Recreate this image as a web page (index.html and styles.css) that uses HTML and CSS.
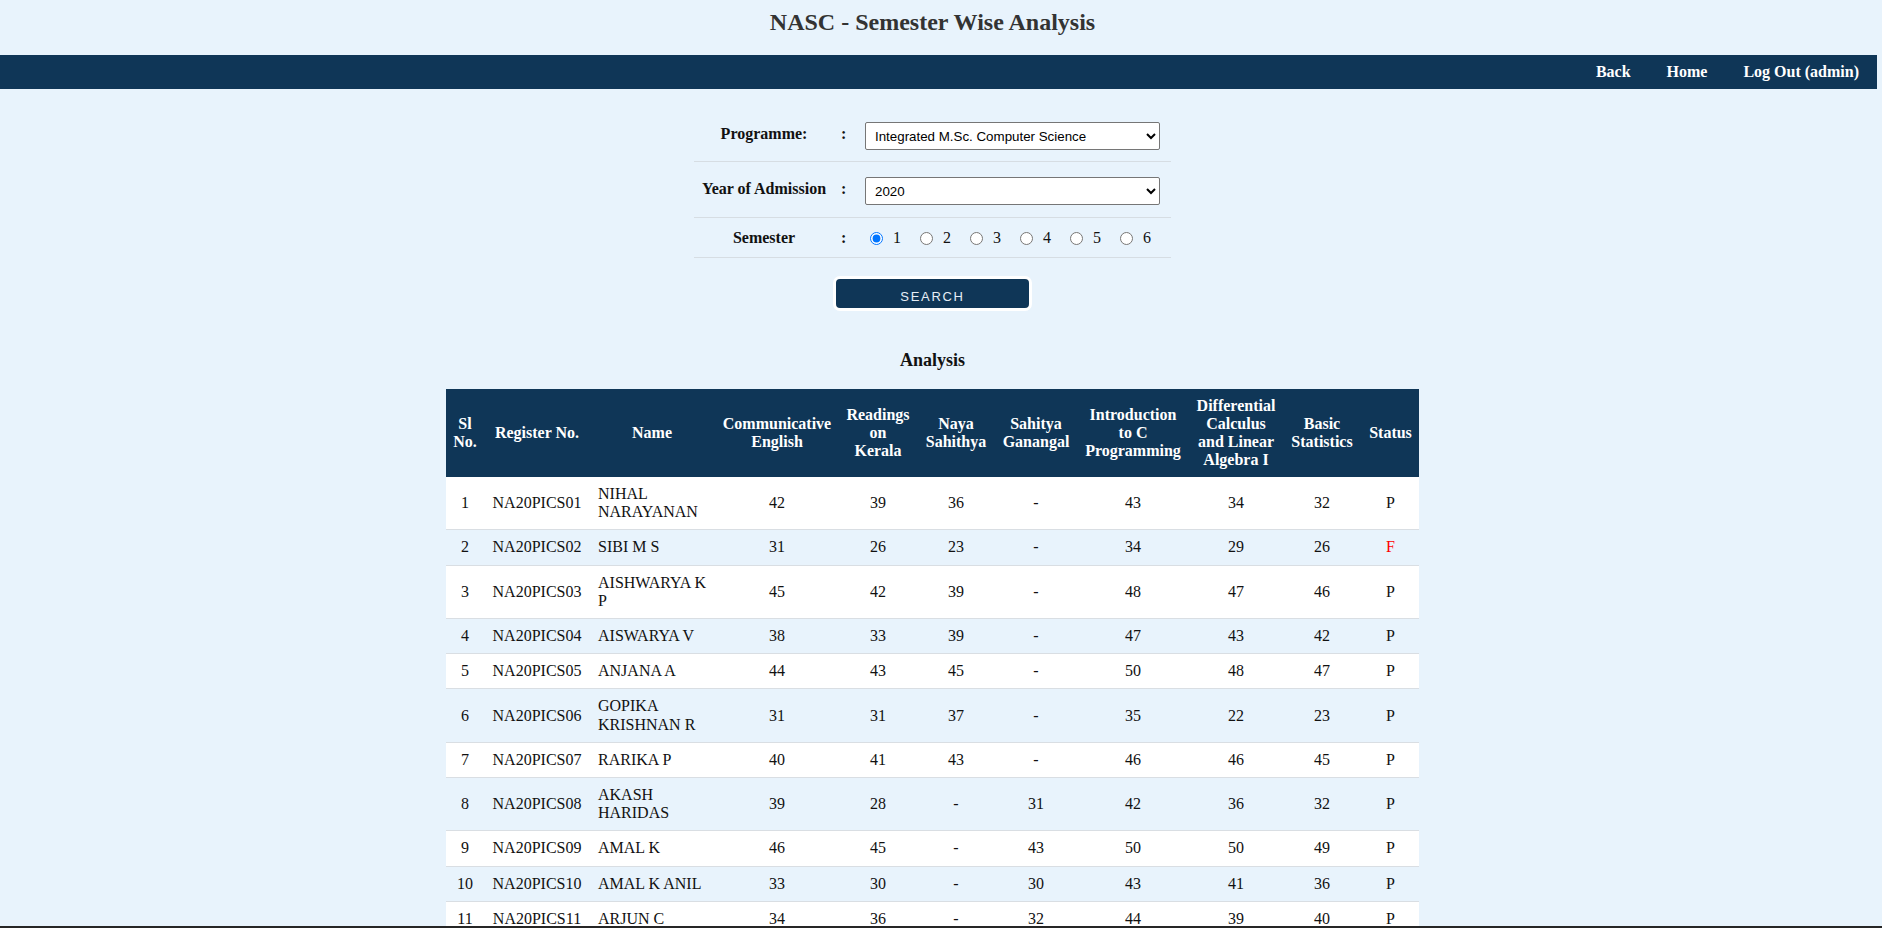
FILE: index.html
```html
<!DOCTYPE html>
<html lang="en">
<head>
<meta charset="utf-8">
<title>NASC - Semester Wise Analysis</title>
<link rel="stylesheet" href="styles.css">
</head>
<body>
<header class="site-header">
  <h1 class="site-title">NASC - Semester Wise Analysis</h1>
</header>
<nav class="topnav">
  <a class="topnav-link" href="#">Back</a>
  <a class="topnav-link" href="#">Home</a>
  <a class="topnav-link" href="#">Log Out (admin)</a>
</nav>
<main class="content">
  <form class="filter-form">
    <div class="filter-row row-prog">
      <label class="filter-label">Programme:</label>
      <span class="filter-colon">:</span>
      <div class="filter-field">
        <select class="filter-select">
          <option>Integrated M.Sc. Computer Science</option>
        </select>
      </div>
    </div>
    <div class="filter-row row-year">
      <label class="filter-label">Year of Admission</label>
      <span class="filter-colon">:</span>
      <div class="filter-field">
        <select class="filter-select">
          <option>2020</option>
        </select>
      </div>
    </div>
    <div class="filter-row row-sem">
      <label class="filter-label">Semester</label>
      <span class="filter-colon">:</span>
      <div class="filter-field radios">
        <label class="radio-opt"><input type="radio" name="sem" checked><span>1</span></label>
        <label class="radio-opt"><input type="radio" name="sem"><span>2</span></label>
        <label class="radio-opt"><input type="radio" name="sem"><span>3</span></label>
        <label class="radio-opt"><input type="radio" name="sem"><span>4</span></label>
        <label class="radio-opt"><input type="radio" name="sem"><span>5</span></label>
        <label class="radio-opt"><input type="radio" name="sem"><span>6</span></label>
      </div>
    </div>
    <div class="form-actions">
      <button type="button" class="search-btn">SEARCH</button>
    </div>
  </form>

  <h2 class="section-title">Analysis</h2>

  <table class="analysis">
    <colgroup>
      <col class="c-sl"><col class="c-reg"><col class="c-name"><col class="c-eng"><col class="c-read">
      <col class="c-naya"><col class="c-sahi"><col class="c-intro"><col class="c-diff"><col class="c-stat"><col class="c-status">
    </colgroup>
    <thead>
      <tr>
        <th>Sl No.</th>
        <th>Register No.</th>
        <th>Name</th>
        <th>Communicative English</th>
        <th>Readings on Kerala</th>
        <th>Naya Sahithya</th>
        <th>Sahitya Ganangal</th>
        <th>Introduction to C Programming</th>
        <th>Differential Calculus and Linear Algebra I</th>
        <th>Basic Statistics</th>
        <th class="th-status">Status</th>
      </tr>
    </thead>
    <tbody>
      <tr><td>1</td><td>NA20PICS01</td><td class="name">NIHAL NARAYANAN</td><td>42</td><td>39</td><td>36</td><td>-</td><td>43</td><td>34</td><td>32</td><td>P</td></tr>
      <tr><td>2</td><td>NA20PICS02</td><td class="name">SIBI M S</td><td>31</td><td>26</td><td>23</td><td>-</td><td>34</td><td>29</td><td>26</td><td class="fail">F</td></tr>
      <tr><td>3</td><td>NA20PICS03</td><td class="name">AISHWARYA K P</td><td>45</td><td>42</td><td>39</td><td>-</td><td>48</td><td>47</td><td>46</td><td>P</td></tr>
      <tr><td>4</td><td>NA20PICS04</td><td class="name">AISWARYA V</td><td>38</td><td>33</td><td>39</td><td>-</td><td>47</td><td>43</td><td>42</td><td>P</td></tr>
      <tr><td>5</td><td>NA20PICS05</td><td class="name">ANJANA A</td><td>44</td><td>43</td><td>45</td><td>-</td><td>50</td><td>48</td><td>47</td><td>P</td></tr>
      <tr><td>6</td><td>NA20PICS06</td><td class="name">GOPIKA KRISHNAN R</td><td>31</td><td>31</td><td>37</td><td>-</td><td>35</td><td>22</td><td>23</td><td>P</td></tr>
      <tr><td>7</td><td>NA20PICS07</td><td class="name">RARIKA P</td><td>40</td><td>41</td><td>43</td><td>-</td><td>46</td><td>46</td><td>45</td><td>P</td></tr>
      <tr><td>8</td><td>NA20PICS08</td><td class="name">AKASH HARIDAS</td><td>39</td><td>28</td><td>-</td><td>31</td><td>42</td><td>36</td><td>32</td><td>P</td></tr>
      <tr><td>9</td><td>NA20PICS09</td><td class="name">AMAL K</td><td>46</td><td>45</td><td>-</td><td>43</td><td>50</td><td>50</td><td>49</td><td>P</td></tr>
      <tr><td>10</td><td>NA20PICS10</td><td class="name">AMAL K ANIL</td><td>33</td><td>30</td><td>-</td><td>30</td><td>43</td><td>41</td><td>36</td><td>P</td></tr>
      <tr><td>11</td><td>NA20PICS11</td><td class="name">ARJUN C</td><td>34</td><td>36</td><td>-</td><td>32</td><td>44</td><td>39</td><td>40</td><td>P</td></tr>
    </tbody>
  </table>
</main>
<div class="bottom-edge"></div>
</body>
</html>
```

FILE: styles.css
```css
html, body {
  margin: 0;
  padding: 0;
}
body {
  background: #e8f3fc;
  font-family: "Liberation Serif", "Times New Roman", serif;
  font-size: 16px;
  color: #111;
  width: 1882px;
  overflow: hidden;
}

.site-header {
  width: 1865px;
  padding: 9px 0 19px;
  text-align: center;
}
.site-title {
  margin: 0;
  font-size: 24px;
  line-height: 27px;
  font-weight: bold;
  color: #333;
}

.topnav {
  width: 1877px;
  height: 34px;
  background: #0f3657;
  display: flex;
  justify-content: flex-end;
  align-items: center;
}
.topnav-link {
  color: #fff;
  font-weight: bold;
  text-decoration: none;
  padding: 0 18px;
  line-height: 34px;
}

.content {
  width: 1865px;
  display: flex;
  flex-direction: column;
  align-items: center;
}

.filter-form {
  width: 477px;
  margin-top: 21px;
}
.filter-row {
  display: grid;
  grid-template-columns: 140px 31px 306px;
  align-items: center;
  border-bottom: 1px solid #d6dde3;
}
.row-prog { padding: 12px 0 11px; }
.row-year { padding: 15px 0 12px; }
.row-sem { padding: 11px 0 10px; }

.filter-label {
  font-weight: bold;
  text-align: center;
  margin-top: -5px;
}
.row-sem .filter-label { margin-top: 0; }
.filter-colon {
  font-weight: bold;
  padding-left: 7px;
  margin-top: -5px;
}
.row-sem .filter-colon { margin-top: 0; }
.filter-select {
  width: 295px;
  height: 28px;
  font-family: "Liberation Sans", Arial, sans-serif;
  font-size: 13.33px;
  color: #000;
  background: #fff;
  border: 1px solid #767676;
  border-radius: 2px;
  padding: 0 5px;
}
.radios {
  display: flex;
  height: 18px;
  align-items: center;
}
.radio-opt {
  display: inline-flex;
  align-items: center;
  width: 50px;
  line-height: 18px;
}
.radio-opt input {
  width: 13px;
  height: 13px;
  margin: 0 10px 0 5px;
}

.form-actions {
  display: flex;
  justify-content: center;
  margin-top: 18px;
}
.search-btn {
  width: 199px;
  height: 35px;
  background: #0f3657;
  border: 3px solid #fff;
  border-radius: 7px;
  color: #e6eef6;
  font-family: "Liberation Sans", Arial, sans-serif;
  font-size: 13px;
  letter-spacing: 1.7px;
  padding: 6px 0 0;
  cursor: pointer;
}

.section-title {
  margin: 39px 0 18px;
  font-size: 18px;
  line-height: 21px;
  font-weight: bold;
  color: #111;
}

.analysis {
  width: 973px;
  table-layout: fixed;
  border-collapse: collapse;
  margin-bottom: 40px;
}
.c-sl { width: 38px; }
.c-reg { width: 106px; }
.c-name { width: 124px; }
.c-eng { width: 126px; }
.c-read { width: 76px; }
.c-naya { width: 80px; }
.c-sahi { width: 80px; }
.c-intro { width: 114px; }
.c-diff { width: 92px; }
.c-stat { width: 80px; }
.c-status { width: 57px; }

.analysis th {
  background: #0f3657;
  color: #fff;
  font-weight: bold;
  line-height: 18px;
  padding: 8px 6px;
  text-align: center;
  vertical-align: middle;
}
.analysis th.th-status { padding: 8px 4px; }
.analysis td {
  line-height: 18.2px;
  padding: 8px 4px;
  text-align: center;
  vertical-align: middle;
  color: #111;
  border-bottom: 1px solid #d9dee3;
}
.analysis td.name {
  text-align: left;
  padding: 8px 6px 8px 8px;
}
.analysis tbody tr:nth-child(odd) td { background: #fff; }
.analysis tbody tr:nth-child(even) td { background: #e8f3fc; }
.analysis td.fail { color: #ff0000; }

.bottom-edge {
  position: fixed;
  left: 0;
  right: 0;
  bottom: 0;
  height: 2px;
  background: #262626;
}
```
